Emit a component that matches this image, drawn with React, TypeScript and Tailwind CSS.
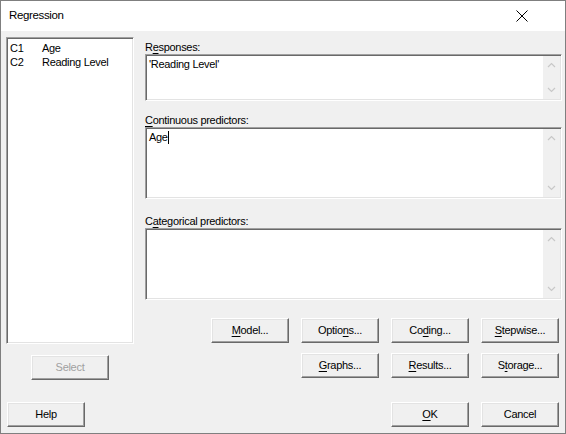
import React from "react";

const font = { fontFamily: '"Liberation Sans", Arial, sans-serif' };

function U({ children }: { children: React.ReactNode }) {
  return <span className="underline underline-offset-[2px] decoration-[1px]">{children}</span>;
}

function Btn({
  children,
  disabled,
  className = "",
}: {
  children: React.ReactNode;
  disabled?: boolean;
  className?: string;
}) {
  return (
    <div
      className={`w-[78px] h-[25px] flex items-center justify-center bg-[#f0f0f0] border border-t-white border-l-white border-r-[#696969] border-b-[#696969] shadow-[inset_-1px_-1px_0_#a0a0a0,inset_1px_1px_0_#e3e3e3] text-[11px] tracking-[-0.3px] ${
        disabled ? "text-[#a0a0a0]" : "text-black"
      } ${className}`}
    >
      {children}
    </div>
  );
}

function Chevron({ up }: { up?: boolean }) {
  return (
    <svg width="9" height="6" viewBox="0 0 9 6" className="block">
      <path
        d={up ? "M1 5 L4.5 1.5 L8 5" : "M1 1 L4.5 4.5 L8 1"}
        fill="none"
        stroke="#c8c8c8"
        strokeWidth="1.2"
      />
    </svg>
  );
}

function Field({ h, children }: { h: string; children?: React.ReactNode }) {
  return (
    <div
      className={`${h} flex bg-white border border-t-[#a0a0a0] border-l-[#a0a0a0] border-r-white border-b-white shadow-[inset_1px_1px_0_#696969,inset_-1px_-1px_0_#e3e3e3]`}
    >
      <div className="flex-1 pl-[3px] pt-[3px] text-[11px] leading-[13px] tracking-[-0.3px] text-black">
        {children}
      </div>
      <div className="w-[17px] my-[1px] mr-[1px] bg-[#f0f0f0] flex flex-col justify-between items-center py-[6px]">
        <Chevron up />
        <Chevron />
      </div>
    </div>
  );
}

export default function App() {
  return (
    <div
      style={font}
      className="w-[566px] h-[434px] border border-[#7f7f7f] flex flex-col bg-[#f0f0f0] overflow-hidden"
    >
      {/* title bar */}
      <div className="h-[30px] bg-white flex items-center justify-between pl-[8px] pr-[37px]">
        <span className="text-[11.5px] tracking-[-0.35px] text-black">Regression</span>
        <svg width="12" height="12" viewBox="0 0 12 12">
          <path d="M0.5 0.5 L11.5 11.5 M11.5 0.5 L0.5 11.5" stroke="#000" strokeWidth="1" />
        </svg>
      </div>

      {/* dialog body */}
      <div className="flex-1 flex flex-col">
        <div className="flex pl-[5px] pt-[6px]">
          {/* variable list */}
          <div className="w-[128px] flex flex-col">
            <div className="h-[307px] bg-white border border-t-[#a0a0a0] border-l-[#a0a0a0] border-r-white border-b-white shadow-[inset_1px_1px_0_#696969,inset_-1px_-1px_0_#e3e3e3] pt-[3px] pl-[3px] text-[11px] leading-[14px] tracking-[-0.3px] text-black">
              <div className="flex">
                <span className="w-[32px]">C1</span>
                <span>Age</span>
              </div>
              <div className="flex">
                <span className="w-[32px]">C2</span>
                <span>Reading Level</span>
              </div>
            </div>
            <Btn disabled className="mt-[11px] ml-[25px]">
              Select
            </Btn>
          </div>

          {/* right column */}
          <div className="w-[417px] ml-[11px] pt-[4px] flex flex-col text-[11px] tracking-[-0.3px] text-black">
            <div className="h-[13px] leading-[13px]">
              R<U>e</U>sponses:
            </div>
            <Field h="h-[47px]">'Reading Level'</Field>
            <div className="h-[13px] leading-[13px] mt-[13px]">
              <U>C</U>ontinuous predictors:
            </div>
            <Field h="h-[72px]">
              <span>Age</span>
              <span className="inline-block w-[1px] h-[13px] bg-black align-top" />
            </Field>
            <div className="h-[13px] leading-[13px] mt-[16px]">
              C<U>a</U>tegorical predictors:
            </div>
            <Field h="h-[72px]" />

            <div className="flex justify-end gap-[12px] pr-[3px] mt-[18px]">
              <Btn>
                <U>M</U>odel...
              </Btn>
              <Btn>
                Optio<U>n</U>s...
              </Btn>
              <Btn>
                Co<U>d</U>ing...
              </Btn>
              <Btn>
                <U>S</U>tepwise...
              </Btn>
            </div>
            <div className="flex justify-end gap-[12px] pr-[3px] mt-[10px]">
              <Btn>
                <U>G</U>raphs...
              </Btn>
              <Btn>
                <U>R</U>esults...
              </Btn>
              <Btn>
                S<U>t</U>orage...
              </Btn>
            </div>
          </div>
        </div>

        {/* bottom buttons */}
        <div className="flex items-center pl-[6px] pr-[6px] mt-[22px]">
          <Btn>Help</Btn>
          <div className="flex-1" />
          <div className="flex gap-[12px]">
            <Btn>
              <U>O</U>K
            </Btn>
            <Btn>Cancel</Btn>
          </div>
        </div>
      </div>
    </div>
  );
}
